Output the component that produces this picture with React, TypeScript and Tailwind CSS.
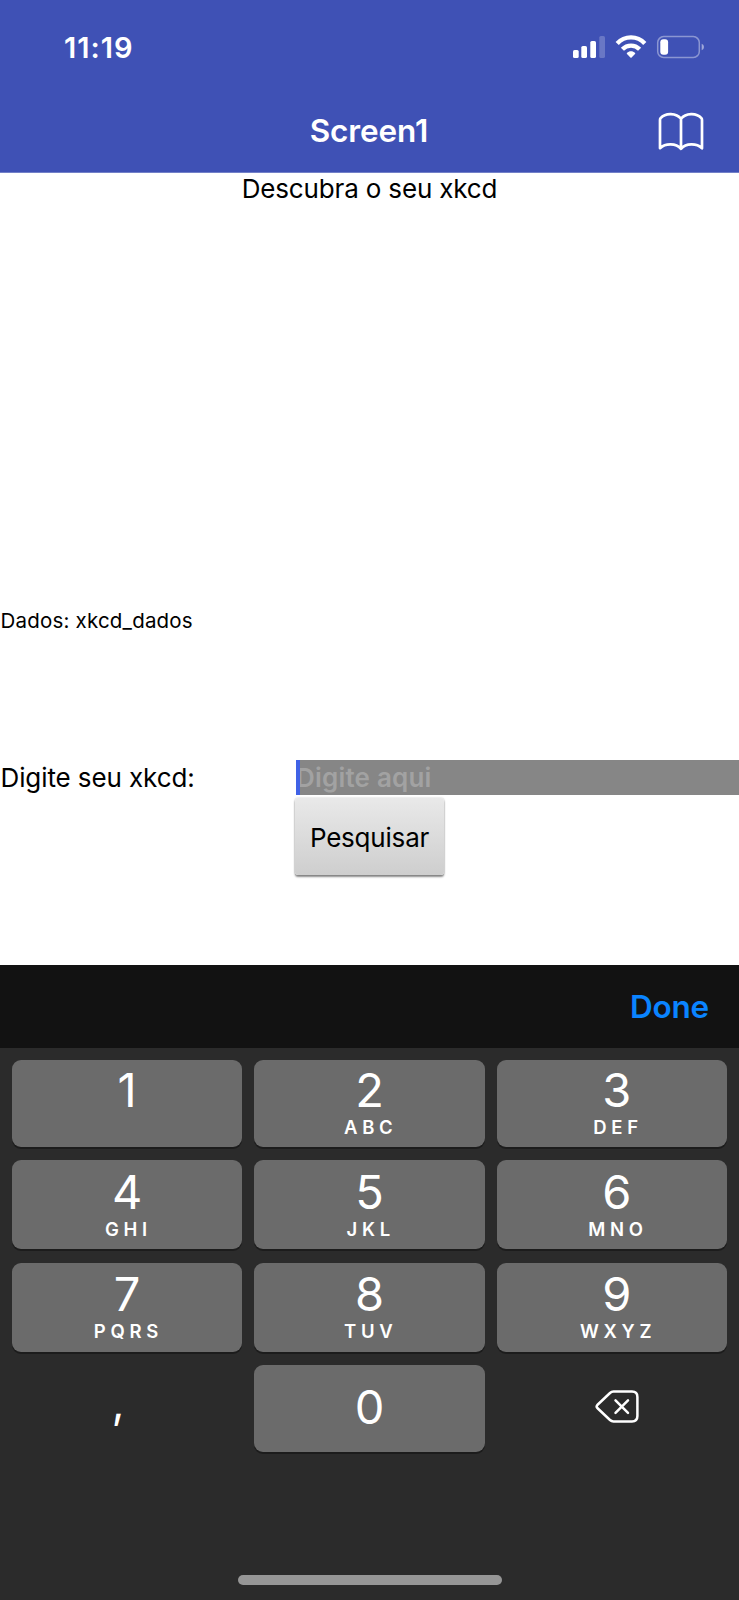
import React from "react";

type KeyDef = { digit: string; letters?: string };

const rows: { keys: KeyDef[]; box: string; pad: string }[] = [
  {
    keys: [{ digit: "1" }, { digit: "2", letters: "ABC" }, { digit: "3", letters: "DEF" }],
    box: "h-[87px] mb-[13px]",
    pad: "pt-[10px]",
  },
  {
    keys: [
      { digit: "4", letters: "GHI" },
      { digit: "5", letters: "JKL" },
      { digit: "6", letters: "MNO" },
    ],
    box: "h-[89px] mb-[13.5px]",
    pad: "pt-[12px]",
  },
  {
    keys: [
      { digit: "7", letters: "PQRS" },
      { digit: "8", letters: "TUV" },
      { digit: "9", letters: "WXYZ" },
    ],
    box: "h-[89px] mb-[13px]",
    pad: "pt-[11.5px]",
  },
];

function Key({ digit, letters, pad }: KeyDef & { pad: string }) {
  return (
    <button
      className={`flex flex-col items-center rounded-[9px] bg-[#6b6b6b] text-white shadow-[0_2px_0_#1c1c1c] nth-[3]:pl-[10px] ${pad}`}
    >
      <span className="pr-[1px] text-[47px] leading-[40px] font-normal tracking-[-1px]">{digit}</span>
      {letters && (
        <span className="mt-[7.3px] pl-[2.5px] text-[18.5px] leading-[20px] font-semibold tracking-[4.7px]">
          {letters}
        </span>
      )}
    </button>
  );
}

function StatusIcons() {
  return (
    <svg className="h-[24px] w-[134px]" viewBox="572 35 134 24" fill="white">
      <rect x="573" y="50" width="5.7" height="8" rx="1.6" />
      <rect x="581.3" y="46" width="5.7" height="12" rx="1.6" />
      <rect x="590.3" y="41" width="5.7" height="17" rx="1.6" />
      <rect x="599.3" y="36" width="5.7" height="22" rx="1.6" opacity="0.22" />
      <g fill="none" stroke="white" strokeWidth="4.4">
        <path d="M617.2 43.4C624.7 35.4 637.3 35.4 644.8 43.4" />
        <path d="M622.4 49.2C627.2 44.4 634.8 44.4 639.6 49.2" />
      </g>
      <path d="M626.9 53C629.2 50.6 632.8 50.6 635.1 53Q635.4 53.4 635 53.9L631.6 57.6Q631 58.1 630.4 57.6L627 53.9Q626.6 53.4 626.9 53Z" />
      <rect x="657.7" y="36.6" width="41.6" height="20.8" rx="6" fill="none" stroke="white" strokeWidth="1.5" opacity="0.4" />
      <rect x="660.3" y="39.2" width="7.8" height="15.6" rx="3" />
      <path d="M701.7 43.8Q704 44.8 704 47Q704 49.2 701.7 50.2Z" opacity="0.5" />
    </svg>
  );
}

function BookIcon() {
  return (
    <svg
      className="h-[40px] w-[48px]"
      viewBox="657 111 48 40"
      fill="none"
      stroke="white"
      strokeWidth="2.7"
      strokeLinejoin="round"
      strokeLinecap="round"
    >
      <path d="M681 118.8C676.5 112.9 665.5 112.5 660.6 118.2Q660 118.9 660 120V148.2C665.5 143 676 143 681 148.8C686 143 696.5 143 702 148.2V120Q702 118.9 701.4 118.2C696.5 112.5 685.5 112.9 681 118.8V148.8" />
    </svg>
  );
}

function BackspaceIcon() {
  return (
    <svg
      className="h-[34px] w-[46px]"
      viewBox="594 1389 46 34"
      fill="none"
      stroke="white"
      strokeWidth="2.5"
      strokeLinecap="round"
      strokeLinejoin="round"
    >
      <path d="M613.5 1391.6H632Q637.4 1391.6 637.4 1397V1416Q637.4 1421.4 632 1421.4H613.5Q611.5 1421.4 610 1420L597.3 1408Q596 1406.5 597.3 1405L610 1393Q611.5 1391.6 613.5 1391.6Z" />
      <path d="M615.5 1400.3L628 1412.8M628 1400.3L615.5 1412.8" />
    </svg>
  );
}

export default function App() {
  return (
    <div className="flex h-[1600px] w-[739px] flex-col overflow-hidden bg-white font-['Inter',sans-serif] text-black">
      <header className="flex h-[173px] shrink-0 flex-col border-b border-[#7280c8] bg-[#3f51b5] text-white">
        <div className="flex h-[94px] items-center justify-between pr-[33px] pl-[64px]">
          <span className="pt-[2px] text-[29px] leading-[34px] font-semibold tracking-[1px]">11:19</span>
          <StatusIcons />
        </div>
        <div className="grid h-[74px] grid-cols-[1fr_auto_1fr] items-center pr-[34px]">
          <h1 className="col-start-2 pl-[33px] text-[31.5px] leading-[36px] font-semibold tracking-[-0.1px]">
            Screen1
          </h1>
          <div className="flex justify-end">
            <BookIcon />
          </div>
        </div>
      </header>

      <main className="flex h-[792px] shrink-0 flex-col">
        <p className="h-[33px] text-center text-[26px] leading-[31px] tracking-[-0.16px]">Descubra o seu xkcd</p>
        <p className="mt-[402px] h-[26px] pl-[0.5px] text-[20.5px] leading-[26px] tracking-[0.2px]">
          Dados: xkcd_dados
        </p>
        <div className="mt-[126px] flex h-[35px]">
          <label className="w-[296px] pl-[0.5px] text-[26px] leading-[35px] tracking-[-0.1px]">
            Digite seu xkcd:
          </label>
          <div className="relative flex-1 bg-[#868686] text-[26px] leading-[35px] font-semibold tracking-[0.2px] text-[#a2a2a2]">
            Digite aqui
            <span className="absolute inset-y-0 left-0 w-[4px] bg-[#4062e6]" />
          </div>
        </div>
        <button className="mt-[3px] ml-[295px] h-[77px] w-[149px] rounded-[3px] bg-linear-to-b from-[#e9e9e9] to-[#cecece] text-[26px] leading-[79px] tracking-[-0.2px] shadow-[0_2px_2px_rgba(0,0,0,0.45),0_0_2px_rgba(0,0,0,0.25)]">
          Pesquisar
        </button>
      </main>

      <div className="flex h-[83px] shrink-0 items-center justify-end bg-[#121212] pr-[30px]">
        <button className="text-[31.5px] leading-[40px] font-semibold tracking-[-0.2px] text-[#0a84ff]">
          Done
        </button>
      </div>

      <section className="flex flex-1 flex-col items-center bg-[#2b2b2b] px-[12px] pt-[12px]">
        {rows.map((row) => (
          <div key={row.keys[0].digit} className={`grid w-full grid-cols-3 gap-x-[12px] ${row.box}`}>
            {row.keys.map((k) => (
              <Key key={k.digit} {...k} pad={row.pad} />
            ))}
          </div>
        ))}
        <div className="grid h-[87px] w-full grid-cols-3 gap-x-[12px]">
          <button className="pr-[18px] pb-[13px] text-[44px] leading-[70px] text-white">,</button>
          <Key digit="0" pad="pt-[22px]" />
          <button className="flex items-center justify-center pb-[5px] pl-[10px]">
            <BackspaceIcon />
          </button>
        </div>
        <div className="mt-auto mb-[15px] h-[10px] w-[264px] rounded-full bg-[#969696]" />
      </section>
    </div>
  );
}
